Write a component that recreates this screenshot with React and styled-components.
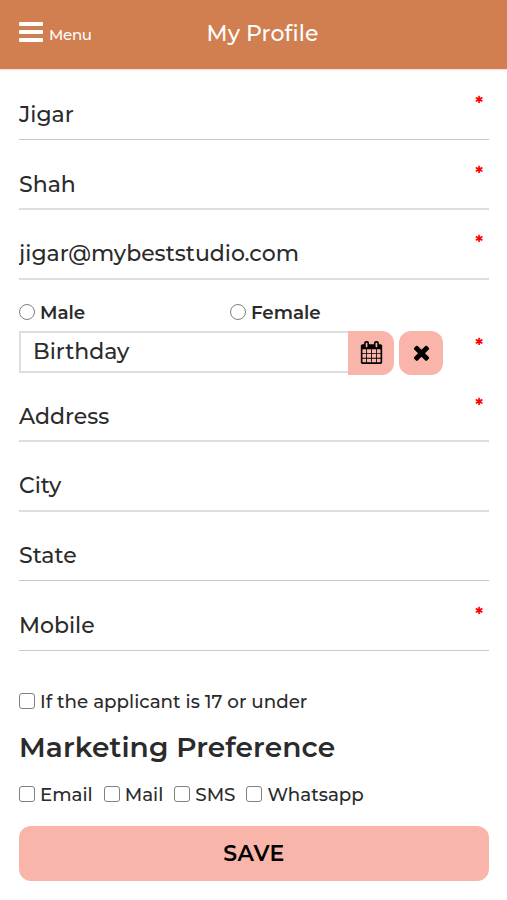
import React, { useState } from 'react'
import styled, { createGlobalStyle } from 'styled-components'

const GlobalStyle = createGlobalStyle`
  * {
    box-sizing: border-box;
  }
  body {
    margin: 0;
    background: #fff;
    color: #2b2b2b;
    font-family: Montserrat, Inter, 'Open Sans', sans-serif;
  }
  input, button {
    font-family: inherit;
    color: inherit;
  }
`

const Header = styled.header`
  display: grid;
  grid-template-columns: 1fr auto 1fr;
  align-items: center;
  height: 69px;
  padding: 0 1px 0 19px;
  background: #d17e50;
  color: #fff;
  box-shadow: 0 1px 1px rgba(209, 126, 80, 0.25);
`
const MenuButton = styled.button`
  display: flex;
  align-items: center;
  gap: 6px;
  padding: 0;
  margin-top: -6px;
  border: 0;
  background: none;
  color: #fff;
`
const Bars = styled.span`
  display: flex;
  flex-direction: column;
  gap: 4px;
  width: 24px;
`
const Bar = styled.span`
  height: 4px;
  border-radius: 1px;
  background: #fff;
`
const MenuText = styled.span`
  padding-top: 6px;
  font-size: 15px;
  line-height: 18px;
  font-weight: 500;
  letter-spacing: -0.3px;
`
const Title = styled.h1`
  margin: 0 0 2px;
  font-size: 22px;
  line-height: 28px;
  font-weight: 500;
  letter-spacing: 0.1px;
`

const Form = styled.form`
  padding: 1px 18px 0 19px;
`
const Field = styled.label`
  position: relative;
  display: flex;
  align-items: flex-end;
  height: ${props => props.$height || 70}px;
  padding-bottom: ${props => props.$drop ? 9 : 10}px;
  border-bottom: ${props => props.$line || 2}px solid ${props => props.$line === 1 ? '#c8c8c8' : '#dedede'};
`
const TextInput = styled.input`
  width: 100%;
  height: 30px;
  padding: 0;
  border: 0;
  outline: 0;
  background: none;
  font-size: 22px;
  font-weight: 500;

  &::placeholder {
    color: inherit;
    opacity: 1;
  }
`
const Required = styled.span`
  position: absolute;
  top: ${props => props.$top}px;
  right: 6px;
  color: #f00;
  font-size: 18px;
  line-height: 18px;
  font-weight: 700;
`

const GenderRow = styled.div`
  display: grid;
  grid-template-columns: 211px 1fr;
  height: 51px;
  padding-top: 23px;
`
const Choice = styled.label`
  display: flex;
  align-items: center;
  gap: 5px;
  height: 20px;
  font-size: 18.3px;
  line-height: 20px;
  font-weight: ${props => props.$bold ? 600 : 500};
  white-space: nowrap;
`
const Box = styled.input`
  appearance: none;
  flex: none;
  width: 16px;
  height: 16px;
  margin: -3px 0 0;
  border: 1px solid #808080;
  border-radius: ${props => props.type === 'radio' ? '50%' : '3px'};
  background: #fff;

  &:checked {
    background: #d17e50;
    box-shadow: inset 0 0 0 3px #fff;
  }
`

const BirthdayRow = styled.div`
  position: relative;
  display: flex;
  height: 44px;
`
const DateBox = styled.div`
  width: 329px;
  height: 42px;
  padding: 3px 12px;
  border: 2px solid #dedede;
  border-right: 0;
`
const IconButton = styled.button`
  display: flex;
  align-items: center;
  justify-content: center;
  width: ${props => props.$width}px;
  height: 44px;
  margin-right: 5px;
  padding: 0 0 2px;
  border: 0;
  border-radius: ${props => props.$attached ? '0 12px 12px 0' : '12px'};
  background: #f9b5aa;
  color: #000;
`

const Applicant = styled.div`
  padding-top: 41px;
`
const Heading = styled.h2`
  margin: 17px 0 20px;
  font-size: 28px;
  line-height: 36px;
  font-weight: 600;
  letter-spacing: 0.1px;
`
const Preferences = styled.div`
  display: flex;
  gap: 11px;
`
const Save = styled.button`
  width: 100%;
  height: 55px;
  margin-top: 21px;
  border: 0;
  border-radius: 12px;
  background: #f9b5aa;
  color: #000;
  font-size: 22px;
  font-weight: 600;
  letter-spacing: 0.4px;
`

const CalendarIcon = () => (
  <svg width="23" height="23" viewBox="0 0 1792 1792" fill="currentColor">
    <path d="M192 1664h288v-288h-288v288zm352 0h320v-288h-320v288zm-352-352h288v-320h-288v320zm352 0h320v-320h-320v320zm-352-384h288v-288h-288v288zm736 736h320v-288h-320v288zm-384-736h320v-288h-320v288zm768 736h288v-288h-288v288zm-384-352h320v-320h-320v320zm-352-864v-288q0-13-9.5-22.5t-22.5-9.5h-64q-13 0-22.5 9.5t-9.5 22.5v288q0 13 9.5 22.5t22.5 9.5h64q13 0 22.5-9.5t9.5-22.5zm736 864h288v-320h-288v320zm-384-384h320v-288h-320v288zm384 0h288v-288h-288v288zm32-480v-288q0-13-9.5-22.5t-22.5-9.5h-64q-13 0-22.5 9.5t-9.5 22.5v288q0 13 9.5 22.5t22.5 9.5h64q13 0 22.5-9.5t9.5-22.5zm384-64v1280q0 52-38 90t-90 38h-1408q-52 0-90-38t-38-90v-1280q0-52 38-90t90-38h128v-96q0-66 47-113t113-47h64q66 0 113 47t47 113v96h384v-96q0-66 47-113t113-47h64q66 0 113 47t47 113v96h128q52 0 90 38t38 90z" />
  </svg>
)

const ClearIcon = () => (
  <svg width="23" height="23" viewBox="0 0 1792 1792" fill="currentColor">
    <path d="M1490 1322q0 40-28 68l-136 136q-28 28-68 28t-68-28l-294-294-294 294q-28 28-68 28t-68-28l-136-136q-28-28-28-68t28-68l294-294-294-294q-28-28-28-68t28-68l136-136q28-28 68-28t68 28l294 294 294-294q28-28 68-28t68 28l136 136q28 28 28 68t-28 68l-294 294 294 294q28 28 28 68z" />
  </svg>
)

const ProfileField = ({ name, value, required, height, line, drop, starTop }) => (
  <Field $height={height} $line={line} $drop={drop}>
    <TextInput placeholder={name} defaultValue={value} />
    { required && <Required $top={starTop || 24}>*</Required> }
  </Field>
)

const App = () => {

  const [birthday, setBirthday] = useState('')

  return (
    <>
      <GlobalStyle />

      <Header>
        <MenuButton type="button">
          <Bars><Bar /><Bar /><Bar /></Bars>
          <MenuText>Menu</MenuText>
        </MenuButton>
        <Title>My Profile</Title>
      </Header>

      <Form onSubmit={e => e.preventDefault()}>
        <ProfileField name="First Name" value="Jigar" required line={1} />
        <ProfileField name="Last Name" value="Shah" required drop />
        <ProfileField name="Email" value="jigar@mybeststudio.com" required starTop={23} />

        <GenderRow>
          <Choice $bold><Box type="radio" name="gender" />Male</Choice>
          <Choice $bold><Box type="radio" name="gender" />Female</Choice>
        </GenderRow>

        <BirthdayRow>
          <DateBox>
            <TextInput
              placeholder="Birthday"
              value={birthday}
              onChange={e => setBirthday(e.target.value)}
            />
          </DateBox>
          <IconButton type="button" $width={46} $attached><CalendarIcon /></IconButton>
          <IconButton type="button" $width={44} onClick={() => setBirthday('')}><ClearIcon /></IconButton>
          <Required $top={5}>*</Required>
        </BirthdayRow>

        <ProfileField name="Address" required height={67} drop starTop={21} />
        <ProfileField name="City" />
        <ProfileField name="State" height={69} line={1} />
        <ProfileField name="Mobile" required line={1} />

        <Applicant>
          <Choice><Box type="checkbox" />If the applicant is 17 or under</Choice>
        </Applicant>

        <Heading>Marketing Preference</Heading>

        <Preferences>
          <Choice><Box type="checkbox" />Email</Choice>
          <Choice><Box type="checkbox" />Mail</Choice>
          <Choice><Box type="checkbox" />SMS</Choice>
          <Choice><Box type="checkbox" />Whatsapp</Choice>
        </Preferences>

        <Save>SAVE</Save>
      </Form>
    </>
  )
}

export default App
